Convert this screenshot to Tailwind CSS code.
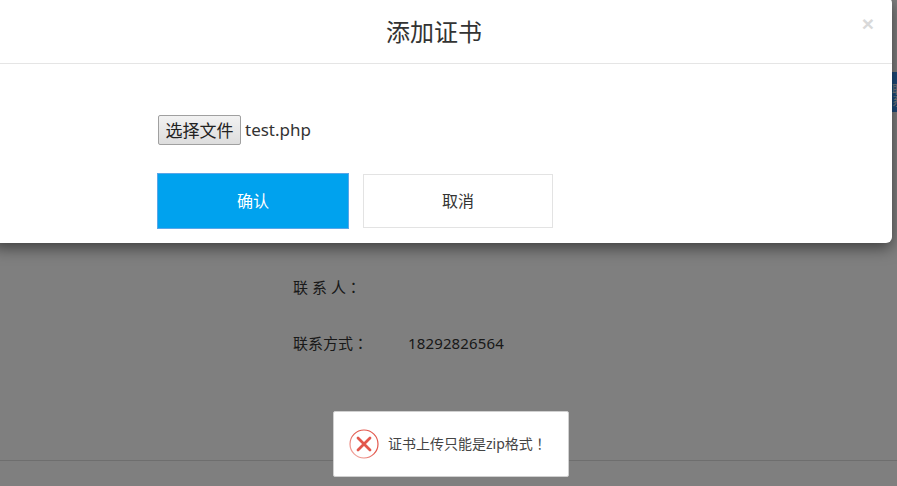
<!DOCTYPE html>
<html lang="zh">
<head>
    <meta charset="UTF-8">
    <meta name="viewport" content="width=device-width, initial-scale=1.0">
    <title>添加证书</title>
    <script src="https://cdn.jsdelivr.net/npm/@tailwindcss/browser@4"></script>
</head>
<body class="relative h-[486px] w-[897px] overflow-hidden bg-white font-['Noto_Sans','Noto_Sans_CJK_SC',sans-serif] text-[#333]">
    <!-- 页面内容 -->
    <div class="h-full">
        <div class="flex h-[72px] justify-end pt-[72px]">
            <div class="h-10 w-[5px] shrink-0 overflow-hidden bg-[#3a95f5] pt-3 text-xs leading-none text-white">联系</div>
        </div>
        <div class="pl-[293px] pt-[203px] text-[15px] leading-6">
            <div class="flex h-6 items-center">
                <span class="tracking-[4px]">联系人<span lang="zh-TW" class="-ml-1 font-['Noto_Sans_CJK_TC',sans-serif]">：</span></span>
            </div>
            <div class="mt-8 flex h-6 items-center">
                <span class="w-[115px]">联系方式<span lang="zh-TW" class="font-['Noto_Sans_CJK_TC',sans-serif]">：</span></span>
                <span class="tracking-[0.14px]">18292826564</span>
            </div>
        </div>
        <div class="mt-[105px] border-t border-[#ddd]"></div>
    </div>

    <!-- 遮罩 -->
    <div class="absolute inset-0 bg-black/50"></div>

    <!-- 弹窗 -->
    <div class="absolute left-[-8px] top-[-3px] h-[246px] w-[900px] rounded-md bg-white shadow-[0_5px_15px_rgba(0,0,0,0.5)]">
        <div class="relative flex h-[67px] items-center justify-center border-b border-[#e5e5e5] pr-4 pt-[3px]">
            <h4 class="text-2xl leading-8">添加证书</h4>
            <span class="absolute right-[18px] top-[16px] font-['Liberation_Sans',sans-serif] text-[21px] font-bold leading-[21px] text-[#d9d9d9]">×</span>
        </div>
        <div class="pl-[165px] pt-[51px]">
            <div class="ml-px flex h-[30px] items-center">
                <button class="h-[30px] w-[83px] rounded-[2px] border border-[#a0a0a0] bg-gradient-to-b from-[#f2f2f2] to-[#dddddd] text-[17px] leading-none text-[#222]">选择文件</button>
                <span class="ml-1 text-[17px]">test.php</span>
            </div>
            <div class="mt-[28px] flex gap-[14px]">
                <button class="h-[56px] w-[192px] border border-[#5aa6e8] bg-[#00a2ee] text-base text-white">确认</button>
                <button class="mt-px h-[54px] w-[190px] border border-[#e3e3e3] bg-white text-base text-[#333]">取消</button>
            </div>
        </div>
    </div>

    <!-- 提示 -->
    <div class="absolute left-[333px] top-[411px] flex h-[66px] w-[236px] items-center rounded-[2px] border border-[#d0d0d0] bg-white pl-[15px]">
        <svg class="h-[30px] w-[30px] shrink-0" viewBox="0 0 30 30" fill="none">
            <defs>
                <linearGradient id="ring" x1="1" y1="0" x2="0" y2="1">
                    <stop offset="0.45" stop-color="#e2574c"/>
                    <stop offset="1" stop-color="#f4b8b2"/>
                </linearGradient>
            </defs>
            <circle cx="15" cy="15" r="14" stroke="url(#ring)" stroke-width="1.2"/>
            <path d="M9 9 21 21M21 9 9 21" stroke="#e2574c" stroke-width="2.800" stroke-linecap="round"/>
        </svg>
        <span class="mb-[2px] ml-[9px] text-sm text-[#444]">证书上传只能是zip格式<span lang="zh-TW" class="font-['Noto_Sans_CJK_TC',sans-serif]">！</span></span>
    </div>
</body>
</html>
